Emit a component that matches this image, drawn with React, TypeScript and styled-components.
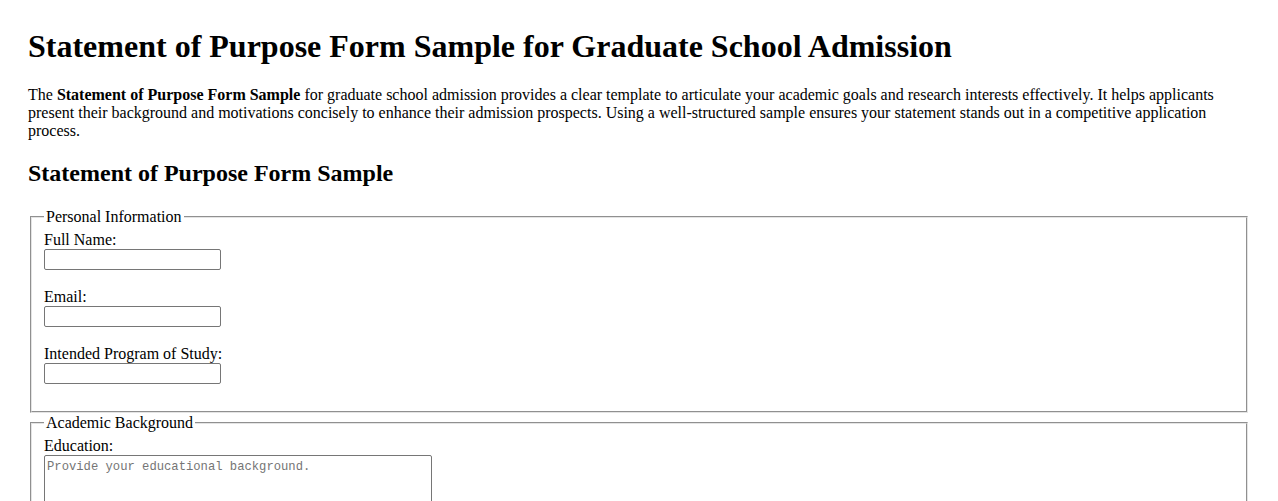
import styled, { createGlobalStyle } from "styled-components";

const GlobalStyle = createGlobalStyle`
    html, body {
        margin: 0;
        padding: 0;
        background: #ffffff;
    }
    body {
        font-family: "Liberation Serif", "Times New Roman", serif;
        font-size: 16px;
        color: #000000;
    }
`;

interface Field {
    id: string;
    label: string;
    kind: "text" | "email" | "textarea";
    placeholder?: string;
}

interface Section {
    legend: string;
    fields: Field[];
}

const sections: Section[] = [
    {
        legend: "Personal Information",
        fields: [
            { id: "fullName", label: "Full Name:", kind: "text" },
            { id: "email", label: "Email:", kind: "email" },
            { id: "program", label: "Intended Program of Study:", kind: "text" },
        ],
    },
    {
        legend: "Academic Background",
        fields: [
            {
                id: "education",
                label: "Education:",
                kind: "textarea",
                placeholder: "Provide your educational background.",
            },
        ],
    },
];

const App = () => {
    return (
        <Page>
            <GlobalStyle />
            <Title>Statement of Purpose Form Sample for Graduate School Admission</Title>
            <Intro>
                The <strong>Statement of Purpose Form Sample</strong> for graduate school admission provides a
                clear template to articulate your academic goals and research interests effectively. It helps
                applicants present their background and motivations concisely to enhance their admission
                prospects. Using a well-structured sample ensures your statement stands out in a competitive
                application process.
            </Intro>
            <SubTitle>Statement of Purpose Form Sample</SubTitle>
            <form onSubmit={(e) => e.preventDefault()}>
                {sections.map((section) => (
                    <Group key={section.legend}>
                        <Legend>{section.legend}</Legend>
                        {section.fields.map((field) => (
                            <FieldRow key={field.id}>
                                <Label htmlFor={field.id}>{field.label}</Label>
                                {field.kind === "textarea" ? (
                                    <TextArea id={field.id} placeholder={field.placeholder} />
                                ) : (
                                    <Input id={field.id} type={field.kind} />
                                )}
                            </FieldRow>
                        ))}
                    </Group>
                ))}
            </form>
        </Page>
    );
};

export default App;

// Styled Components
const Page = styled.div`
    padding: 28px 28px 20px;
`;

const Title = styled.h1`
    font-size: 32px;
    font-weight: bold;
    margin: 0 0 21.44px;
    line-height: normal;
`;

const Intro = styled.p`
    margin: 16px 0;
    line-height: normal;
`;

const SubTitle = styled.h2`
    font-size: 24px;
    font-weight: bold;
    margin: 19.92px 0 20.5px;
    line-height: normal;
`;

const Group = styled.fieldset`
    margin: 0 2px 1px;
    padding: 5.6px 12px 10px;
    border: 2px groove #e4e4e4;
    min-width: 0;
`;

const Legend = styled.legend`
    padding: 0 2px;
    line-height: normal;
`;

const FieldRow = styled.div`
    display: flex;
    flex-direction: column;
    align-items: flex-start;
    margin-bottom: 17.6px;

    &:last-child {
        margin-bottom: 17px;
    }
`;

const Label = styled.label`
    line-height: normal;
`;

const Input = styled.input`
    box-sizing: border-box;
    width: 177px;
    height: 21px;
    margin: 0;
    padding: 1px 2px;
    border: 1px solid #767676;
    border-radius: 2px;
    font-family: "Liberation Sans", Arial, sans-serif;
    font-size: 13.33px;
`;

const TextArea = styled.textarea`
    box-sizing: border-box;
    width: 388px;
    height: 80px;
    margin: 0;
    padding: 4px 2px 2px;
    border: 1px solid #767676;
    border-radius: 2px;
    font-family: "Liberation Mono", "Courier New", monospace;
    font-size: 12.2px;

    &::placeholder {
        color: #757575;
    }
`;
